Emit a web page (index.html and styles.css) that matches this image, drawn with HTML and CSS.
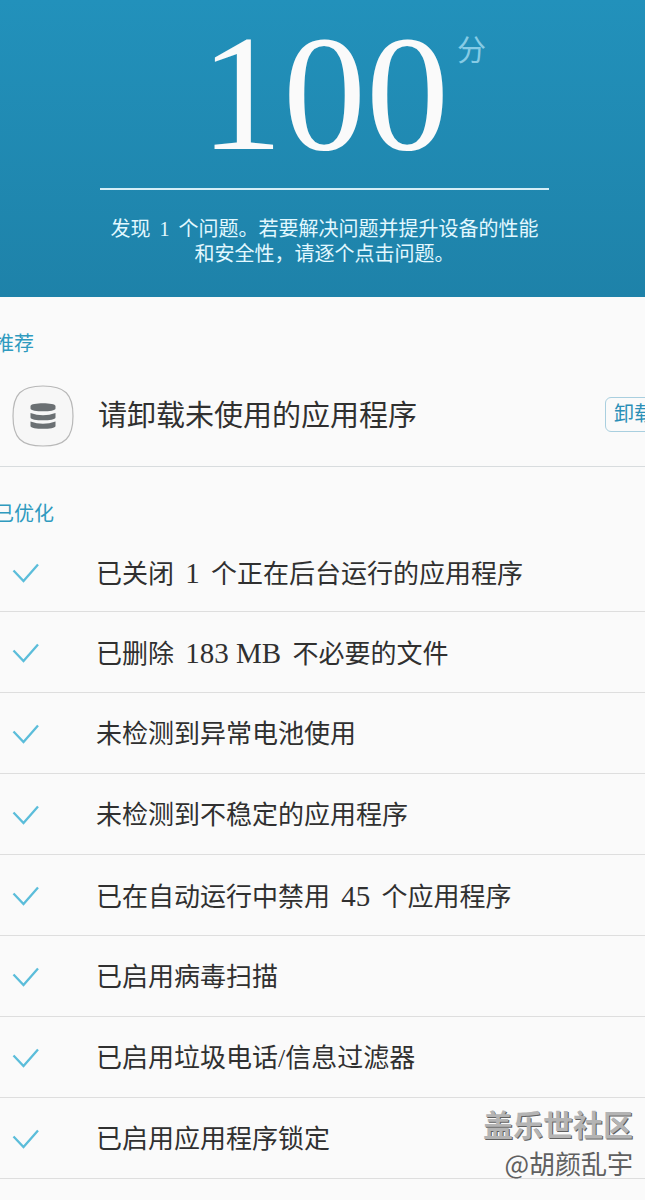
FILE: index.html
```html
<!DOCTYPE html>
<html lang="zh-CN">
<head>
    <meta charset="UTF-8">
    <meta name="viewport" content="width=device-width, initial-scale=1">
    <title>智能管理器</title>
    <link rel="stylesheet" href="styles.css">
</head>
<body>
    <svg class="sprite" aria-hidden="true">
        <symbol id="check" viewBox="0 0 28 22">
            <path d="M1.500 7.500 11.500 18 26 1.500" fill="none" stroke="currentColor" stroke-width="2.300"/>
        </symbol>
    </svg>

    <header class="score-panel">
        <h1 class="score">100<span class="score-unit">分</span></h1>
        <p class="summary">发现<span class="num"> 1 </span>个问题。若要解决问题并提升设备的性能<br>和安全性，请逐个点击问题。</p>
    </header>

    <main>
        <section>
            <h2>推荐</h2>
            <div class="suggestion">
                <svg class="app-icon" viewBox="0 0 62 62" aria-hidden="true">
                    <path d="M31 1C53 1 61 9 61 31S53 61 31 61 1 53 1 31 9 1 31 1Z" fill="#f7f7f7" stroke="#b8b8b8" stroke-width="1.200"/>
                    <g fill="#6b7073">
                        <path d="M18.500 21C18.500 17.200 43.500 17.200 43.500 21V23.500C43.500 27.300 18.500 27.300 18.500 23.500Z"/>
                        <path d="M18.500 28Q31 32.500 43.500 28V32.500C43.500 36.300 18.500 36.300 18.500 32.500Z"/>
                        <path d="M18.500 36.500Q31 41 43.500 36.500V41C43.500 44.800 18.500 44.800 18.500 41Z"/>
                    </g>
                </svg>
                <span class="suggestion-text">请卸载未使用的应用程序</span>
                <button type="button" class="uninstall">卸载</button>
            </div>
        </section>

        <section>
            <h2>已优化</h2>
            <ul class="results">
                <li><svg class="check"><use href="#check"/></svg><span>已关闭<span class="num"> 1 </span>个正在后台运行的应用程序</span></li>
                <li><svg class="check"><use href="#check"/></svg><span>已删除<span class="num"> 183 MB </span>不必要的文件</span></li>
                <li><svg class="check"><use href="#check"/></svg><span>未检测到异常电池使用</span></li>
                <li><svg class="check"><use href="#check"/></svg><span>未检测到不稳定的应用程序</span></li>
                <li><svg class="check"><use href="#check"/></svg><span>已在自动运行中禁用<span class="num"> 45 </span>个应用程序</span></li>
                <li><svg class="check"><use href="#check"/></svg><span>已启用病毒扫描</span></li>
                <li><svg class="check"><use href="#check"/></svg><span>已启用垃圾电话/信息过滤器</span></li>
                <li><svg class="check"><use href="#check"/></svg><span>已启用应用程序锁定</span></li>
            </ul>
        </section>
    </main>

    <div class="watermark">
        <strong>盖乐世社区</strong>
        <span>@胡颜乱宇</span>
    </div>
</body>
</html>
```
FILE: styles.css
```css
* {
    box-sizing: border-box;
}

body {
    position: relative;
    margin: 0;
    padding-bottom: 22px;
    overflow-x: hidden;
    background-color: #fafafa;
    color: #303030;
    font-family: "Liberation Serif", "Noto Sans CJK SC", serif;
}

.sprite {
    display: none;
}

/* score panel */
.score-panel {
    display: flex;
    flex-direction: column;
    align-items: center;
    padding: 10px 0 30px 4px;
    background: linear-gradient(#2291bb, #1e82a9);
    color: #fafafa;
}

.score {
    position: relative;
    margin: 0;
    font-size: 166px;
    font-weight: normal;
    line-height: 166px;
}

.score-unit {
    position: absolute;
    top: 26px;
    left: 100%;
    padding-left: 8px;
    color: #86cbe5;
    font-size: 29px;
    line-height: 30px;
}

.summary {
    width: 70%;
    margin: 12px 0 0;
    padding-top: 27px;
    border-top: 2px solid #d5eef7;
    color: #e2f8ff;
    font-size: 20px;
    line-height: 25px;
    text-align: center;
    white-space: nowrap;
}

.num {
    padding: 0 4px;
    white-space: pre;
}

/* lists run past both screen edges */
main {
    margin: 0 -18px 0 -6px;
}

h2 {
    margin: 0;
    padding-top: 34px;
    color: #2f9abf;
    font-size: 20px;
    font-weight: normal;
    line-height: 26px;
}

.suggestion {
    display: flex;
    align-items: center;
    height: 110px;
    padding: 9px 0 0 18px;
    border-bottom: 1px solid #d8dcde;
}

.app-icon {
    width: 62px;
    height: 62px;
}

.suggestion-text {
    flex: 1;
    margin-left: 24px;
    padding-bottom: 6px;
    font-size: 29px;
}

.uninstall {
    height: 35px;
    margin-bottom: 4px;
    padding: 0 8px;
    border: 1px solid #a9cfdf;
    border-radius: 6px;
    background-color: transparent;
    color: #2a8fb7;
    font-family: inherit;
    font-size: 20px;
    line-height: 30px;
}

.results {
    margin: 0;
    padding: 0;
    list-style: none;
}

.results li {
    display: flex;
    align-items: center;
    height: 81px;
    padding: 4px 0 0 18px;
    border-bottom: 1px solid #dedede;
    font-size: 26px;
    line-height: 40px;
}

.results li:first-child {
    height: 85px;
    padding-top: 10px;
}

.results .num {
    font-size: 29px;
}

.check {
    width: 28px;
    height: 22px;
    margin-right: 56px;
    color: #5bbdda;
}

/* forum watermark */
.watermark {
    position: absolute;
    right: 12px;
    bottom: 20px;
    display: flex;
    flex-direction: column;
    align-items: flex-end;
    color: #606060;
    font-family: "Noto Sans CJK SC", sans-serif;
    font-size: 26px;
    line-height: 36px;
}

.watermark strong {
    color: #b4b4b4;
    font-size: 30px;
    line-height: 44px;
    text-shadow: 1px 1px #606060;
}
```
